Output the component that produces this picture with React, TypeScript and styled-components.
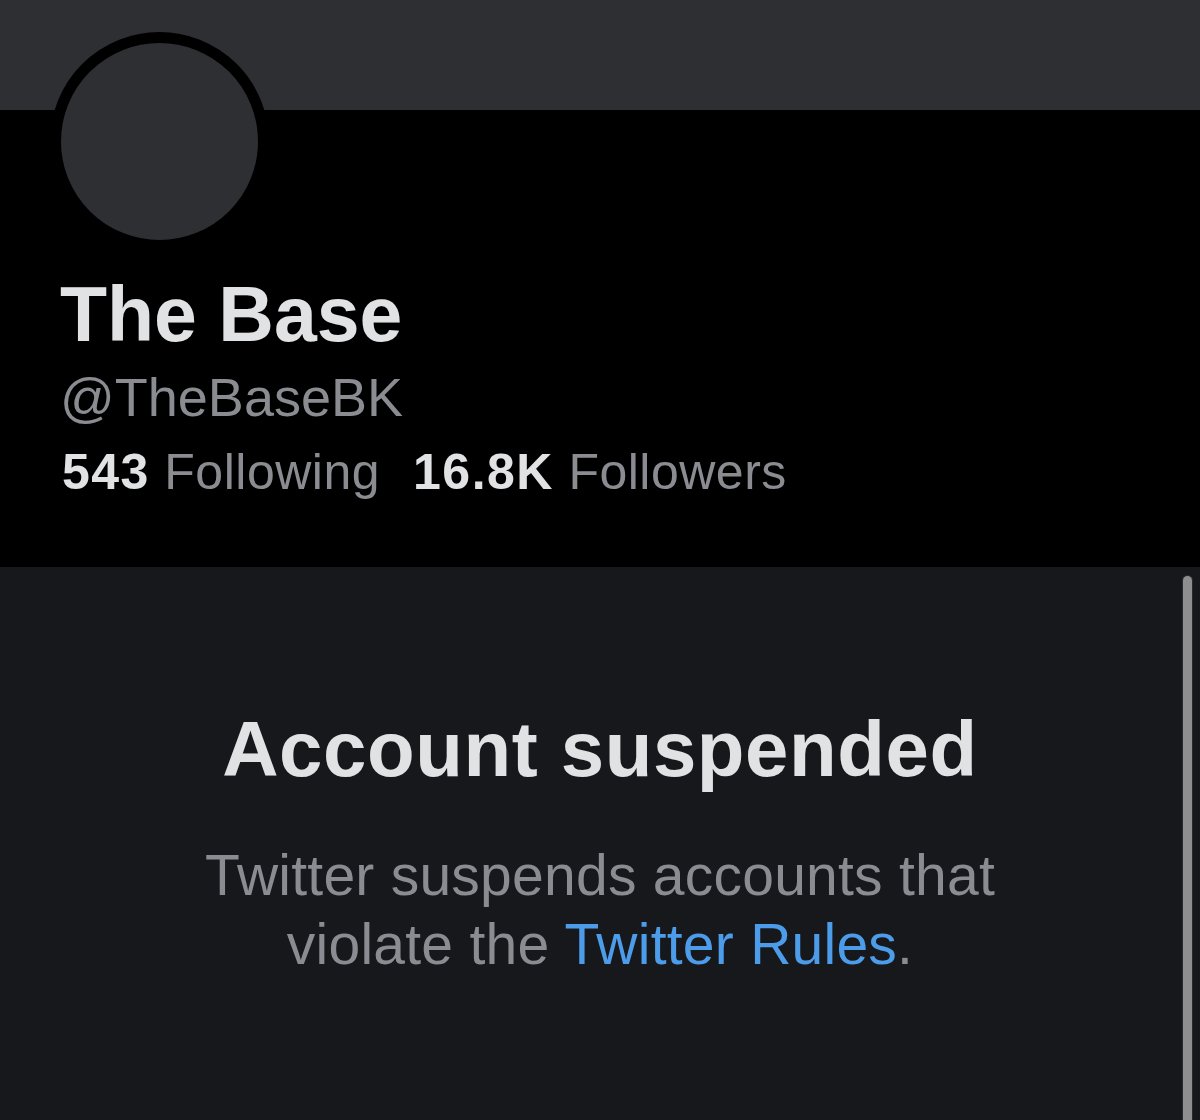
import styled, { createGlobalStyle } from 'styled-components';

const GlobalStyle = createGlobalStyle`
  html, body {
    margin: 0;
    padding: 0;
    background: #17181c;
  }
  body {
    font-family: "Liberation Sans", Arial, sans-serif;
  }
`;

const Page = styled.div`
  display: flex;
  flex-direction: column;
  width: 1200px;
  min-height: 1120px;
`;

const Banner = styled.div`
  height: 110px;
  background-color: #2e2f33;
`;

const Header = styled.div`
  display: flex;
  flex-direction: column;
  background-color: #000;
  padding: 0 0 67px 60px;
`;

const Avatar = styled.div`
  width: 197px;
  height: 197px;
  margin: -78px 0 0 -10px;
  border: 11px solid #000;
  border-radius: 50%;
  background-color: #2e2f33;
`;

const Name = styled.h1`
  margin: 19px 0 0;
  font-size: 77px;
  line-height: 88px;
  font-weight: 700;
  color: #e1e2e4;
`;

const Handle = styled.div`
  margin-top: 8px;
  font-size: 54px;
  line-height: 62px;
  color: #8a8c91;
`;

const Stats = styled.div`
  display: flex;
  gap: 33px;
  margin: 16px 0 0 2px;
  font-size: 50px;
  line-height: 56px;
`;

const Stat = styled.span`
  color: #8a8c91;
  letter-spacing: 0.5px;
`;

const Count = styled.b`
  color: #e1e2e4;
  font-weight: 700;
  letter-spacing: 1.5px;
`;

const Body = styled.div`
  position: relative;
  flex: 1;
  display: flex;
  flex-direction: column;
  align-items: center;
  padding-top: 137px;
  background-color: #17181c;
`;

const Title = styled.h2`
  margin: 0;
  font-size: 78px;
  line-height: 90px;
  font-weight: 700;
  letter-spacing: 0.6px;
  color: #e1e2e4;
`;

const Message = styled.p`
  max-width: 840px;
  margin: 47px 0 0;
  font-size: 57px;
  line-height: 69px;
  letter-spacing: 0.25px;
  text-align: center;
  color: #8a8c91;
`;

const RulesLink = styled.a`
  color: #4c9ce9;
  text-decoration: none;
`;

const ScrollThumb = styled.div`
  position: absolute;
  top: 9px;
  right: 8px;
  bottom: 0;
  width: 9px;
  border-radius: 5px 5px 0 0;
  background-color: #8e8e91;
  box-shadow: 0 0 0 1px #2a2b2f;
`;

export default function App(): JSX.Element {
  return (
    <Page>
      <GlobalStyle />
      <Banner />
      <Header>
        <Avatar />
        <Name>The Base</Name>
        <Handle>@TheBaseBK</Handle>
        <Stats>
          <Stat>
            <Count>543</Count> Following
          </Stat>
          <Stat>
            <Count>16.8K</Count> Followers
          </Stat>
        </Stats>
      </Header>
      <Body>
        <Title>Account suspended</Title>
        <Message>
          Twitter suspends accounts that violate the <RulesLink href="#">Twitter Rules</RulesLink>.
        </Message>
        <ScrollThumb />
      </Body>
    </Page>
  );
}
